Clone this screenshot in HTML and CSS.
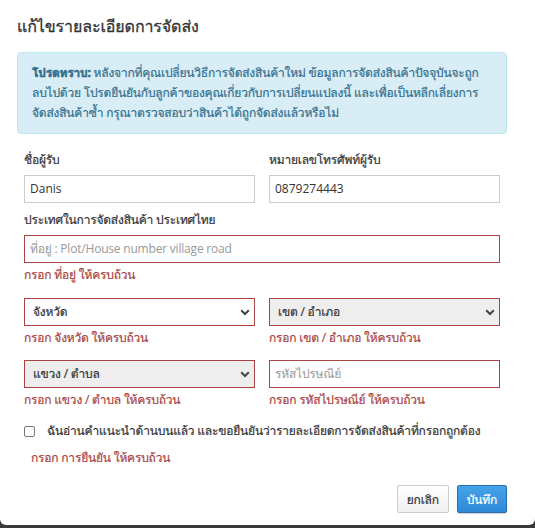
FILE: index.html
```html
<!DOCTYPE html>
<html lang="th">
<head>
<meta charset="utf-8">
<title>แก้ไขรายละเอียดการจัดส่ง</title>
<link rel="stylesheet" href="styles.css">
</head>
<body>
<div class="modal">
  <h4 class="modal-title">แก้ไขรายละเอียดการจัดส่ง</h4>
  <div class="alert"><strong>โปรดทราบ:</strong> หลังจากที่คุณเปลี่ยนวิธีการจัดส่งสินค้าใหม่ ข้อมูลการจัดส่งสินค้าปัจจุบันจะถูกลบไปด้วย โปรดยืนยันกับลูกค้าของคุณเกี่ยวกับการเปลี่ยนแปลงนี้ และเพื่อเป็นหลีกเลี่ยงการจัดส่งสินค้าซ้ำ กรุณาตรวจสอบว่าสินค้าได้ถูกจัดส่งแล้วหรือไม่</div>
  <form class="form">
    <div class="row">
      <div class="field">
        <label class="label">ชื่อผู้รับ</label>
        <div class="input latin">Danis</div>
      </div>
      <div class="field">
        <label class="label">หมายเลขโทรศัพท์ผู้รับ</label>
        <div class="input latin">0879274443</div>
      </div>
    </div>
    <label class="label country">ประเทศในการจัดส่งสินค้า ประเทศไทย</label>
    <div class="input error placeholder">ที่อยู่ : Plot/House number village road</div>
    <div class="help">กรอก ที่อยู่ ให้ครบถ้วน</div>
    <div class="row sel-row">
      <div class="field">
        <div class="select error">จังหวัด<svg class="chev" width="10" height="7" viewBox="0 0 10 7"><path d="M1.2 1.3 L5 5 L8.8 1.3" fill="none" stroke="#444" stroke-width="2"/></svg></div>
        <div class="help">กรอก จังหวัด ให้ครบถ้วน</div>
      </div>
      <div class="field">
        <div class="select error disabled">เขต / อำเภอ<svg class="chev" width="10" height="7" viewBox="0 0 10 7"><path d="M1.2 1.3 L5 5 L8.8 1.3" fill="none" stroke="#444" stroke-width="2"/></svg></div>
        <div class="help">กรอก เขต / อำเภอ ให้ครบถ้วน</div>
      </div>
    </div>
    <div class="row sel-row">
      <div class="field">
        <div class="select error disabled">แขวง / ตำบล<svg class="chev" width="10" height="7" viewBox="0 0 10 7"><path d="M1.2 1.3 L5 5 L8.8 1.3" fill="none" stroke="#444" stroke-width="2"/></svg></div>
        <div class="help">กรอก แขวง / ตำบล ให้ครบถ้วน</div>
      </div>
      <div class="field">
        <div class="input error placeholder">รหัสไปรษณีย์</div>
        <div class="help">กรอก รหัสไปรษณีย์ ให้ครบถ้วน</div>
      </div>
    </div>
    <label class="check"><span class="box"></span><span>ฉันอ่านคำแนะนำด้านบนแล้ว และขอยืนยันว่ารายละเอียดการจัดส่งสินค้าที่กรอกถูกต้อง</span></label>
    <div class="help confirm">กรอก การยืนยัน ให้ครบถ้วน</div>
  </form>
  <div class="footer">
    <button type="button" class="btn btn-default">ยกเลิก</button>
    <button type="button" class="btn btn-primary">บันทึก</button>
  </div>
</div>
</body>
</html>
```
FILE: styles.css
```css
html, body {
  margin: 0;
  padding: 0;
}
body {
  background: #3a3a3a;
  font-family: "Open Sans", "Loma", sans-serif;
  font-size: 12px;
  letter-spacing: -0.2px;
  -webkit-text-stroke: 0.2px currentColor;
  color: #333;
}
.modal {
  background: #fff;
  height: 525px;
  border-radius: 0 0 6px 6px;
  padding: 13px 28px 0 17px;
  box-sizing: border-box;
}
.modal-title {
  margin: 0;
  font-size: 16px;
  font-weight: normal;
  line-height: 26px;
  letter-spacing: -0.1px;
  -webkit-text-stroke: 0.3px currentColor;
  color: #333;
}
.alert {
  margin-top: 13px;
  background: #d9edf7;
  border: 1px solid #bce8f1;
  border-radius: 4px;
  color: #31708f;
  padding: 10px 14px;
  line-height: 20px;
  height: 82px;
  box-sizing: border-box;
}
.alert strong {
  font-weight: bold;
  -webkit-text-stroke: 0.6px currentColor;
}
.form {
  padding: 16px 7px 0 7px;
}
.row {
  display: grid;
  grid-template-columns: 1fr 1fr;
  column-gap: 14px;
}
.label {
  display: block;
  line-height: 20px;
  margin-bottom: 5px;
}
.country { margin-top: 7px; }
.input, .select {
  height: 28px;
  box-sizing: border-box;
  border: 1px solid #ccc;
  padding: 0 5px;
  line-height: 26px;
  color: #333;
  background: #fff;
}
.input.latin {
  letter-spacing: 0;
  -webkit-text-stroke: 0;
}
.input.placeholder { color: #999; -webkit-text-stroke: 0; }
.error { border-color: #a94442; }
.select {
  position: relative;
  padding-left: 8px;
}
.select.disabled { background: #eee; }
.chev {
  position: absolute;
  right: 4px;
  top: 10px;
}
.help {
  color: #a94442;
  line-height: 20px;
  margin-top: 2px;
}
.sel-row { margin-top: 13px; }
.sel-row + .sel-row { margin-top: 12px; }
.check {
  display: flex;
  align-items: center;
  margin-top: 11px;
  line-height: 20px;
}
.box {
  width: 9px;
  height: 9px;
  border: 1px solid #777;
  border-radius: 2px;
  margin-right: 12px;
  flex: none;
}
.confirm {
  margin-top: 7px;
  padding-left: 7px;
}
.footer {
  display: flex;
  justify-content: flex-end;
  gap: 8px;
  margin-top: 17px;
}
.btn {
  height: 28px;
  padding: 0 9px;
  font-family: inherit;
  font-size: 12px;
  letter-spacing: -0.2px;
  border-radius: 2px;
  border: 1px solid #ccc;
  cursor: pointer;
}
.btn-default {
  background: linear-gradient(#fff, #f0f0f0);
  color: #333;
}
.btn-primary {
  background: linear-gradient(#45a3e8, #2e8ad8);
  border-color: #2a6fae;
  color: #fff;
  -webkit-text-stroke: 0.2px #fff;
  box-shadow: 0 1px 1px rgba(0,0,0,0.2);
}
```
